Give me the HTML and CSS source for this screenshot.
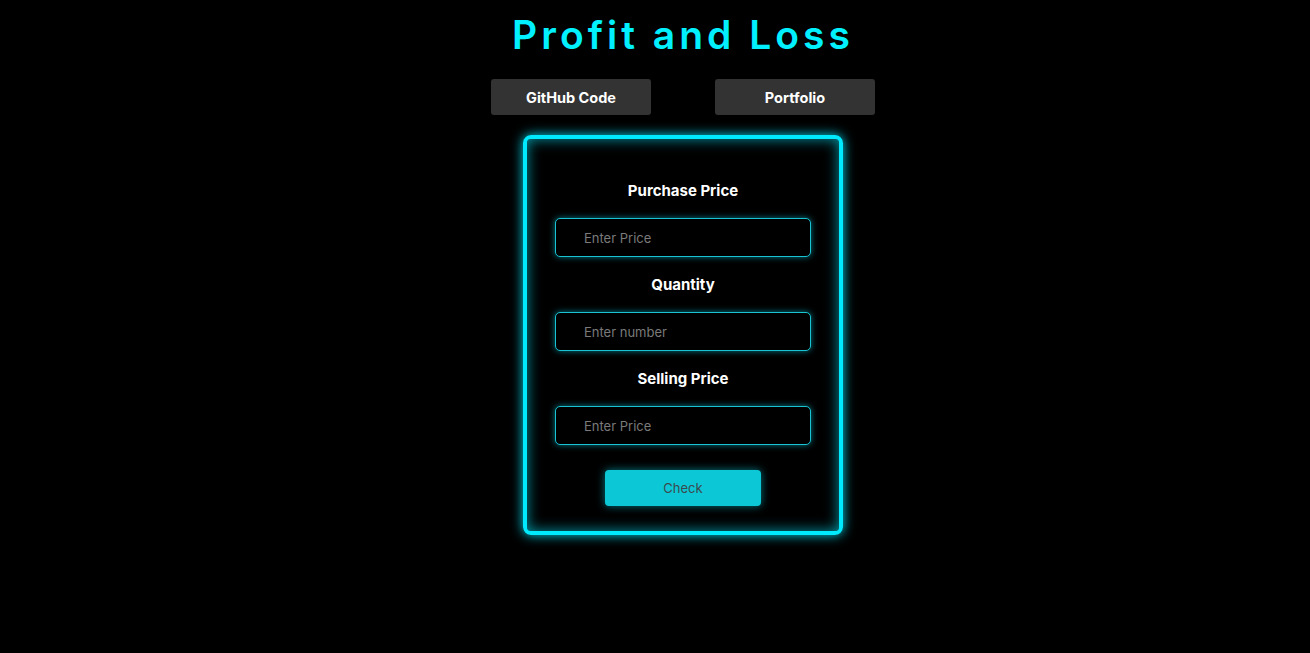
FILE: index.html
```html
<!DOCTYPE html>
<html>
<head>
<meta charset="utf-8">
<link rel="stylesheet" href="styles.css">
</head>
<body>
<div class="page">
  <h1 class="title">Profit and Loss</h1>
  <div class="links">
    <a class="link-btn" href="#">GitHub Code</a>
    <a class="link-btn" href="#">Portfolio</a>
  </div>
  <div class="card">
    <label class="label">Purchase Price</label>
    <input class="field" type="text" placeholder="Enter Price">
    <label class="label">Quantity</label>
    <input class="field" type="text" placeholder="Enter number">
    <label class="label">Selling Price</label>
    <input class="field" type="text" placeholder="Enter Price">
    <button class="check">Check</button>
  </div>
</div>
</body>
</html>
```

FILE: styles.css
```css
html, body {
  margin: 0;
  padding: 0;
  background: #000;
  height: 100%;
  overflow: hidden;
}
body {
  font-family: "Inter", "Noto Sans", sans-serif;
  color: #fff;
}
.page {
  display: flex;
  flex-direction: column;
  align-items: center;
  padding-left: 56px;
  padding-top: 12px;
}
.title {
  margin: 0;
  font-size: 39px;
  font-weight: 600;
  letter-spacing: 4px;
  color: #00f0ff;
  line-height: 46px;
}
.links {
  display: flex;
  gap: 64px;
  margin-top: 21px;
}
.link-btn {
  width: 160px;
  height: 36px;
  background: #333;
  border-radius: 3px;
  color: #fff;
  font-weight: 700;
  font-size: 14.5px;
  text-decoration: none;
  display: flex;
  align-items: center;
  justify-content: center;
}
.card {
  margin-top: 20px;
  width: 312px;
  height: 392px;
  border: 4px solid #00eaff;
  border-radius: 8px;
  box-shadow: 0 0 12px #00d8ee, inset 0 0 14px rgba(0, 216, 238, 0.7);
  display: flex;
  flex-direction: column;
  align-items: center;
  box-sizing: content-box;
}
.label {
  font-weight: 700;
  font-size: 15px;
  line-height: 20px;
  margin-top: 42px;
  margin-bottom: 17px;
}
.label ~ .label {
  margin-top: 18px;
}
.field {
  width: 256px;
  height: 39px;
  box-sizing: border-box;
  background: #000;
  border: 1.5px solid #19c3d2;
  border-radius: 5px;
  box-shadow: 0 0 6px rgba(0, 200, 220, 0.6);
  padding: 0 0 0 28px;
  font-family: inherit;
  font-size: 13px;
  color: #ccc;
  outline: none;
}
.field::placeholder {
  color: #7a7a7a;
}
.check {
  margin-top: 25px;
  width: 156px;
  height: 36px;
  background: #0cc8d6;
  border: none;
  border-radius: 4px;
  box-shadow: 0 0 8px rgba(0, 200, 220, 0.6);
  color: #3b4a4e;
  font-family: inherit;
  font-size: 13px;
}
```
